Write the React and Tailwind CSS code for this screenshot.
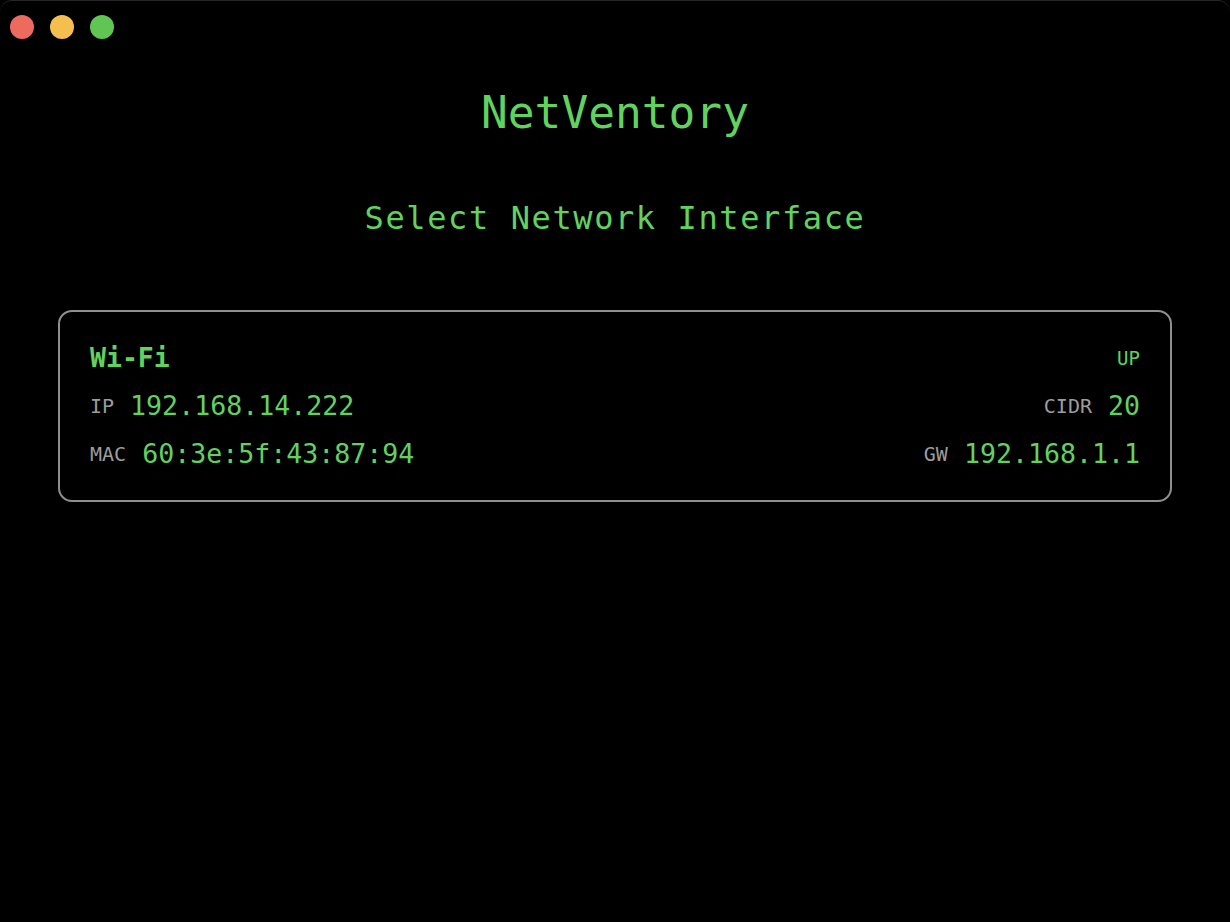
import React from "react";

const iface = {
  name: "Wi-Fi",
  status: "UP",
  ip: "192.168.14.222",
  cidr: "20",
  mac: "60:3e:5f:43:87:94",
  gw: "192.168.1.1",
};

const Field = ({ label, value }) => (
  <div className="flex items-center gap-4">
    <span className="text-[20px] leading-none text-[#9c9c9c]">{label}</span>
    <span className="text-[26.6px] leading-none text-[#62d25f]">{value}</span>
  </div>
);

export default function App() {
  return (
    <div
      className="w-full min-h-screen bg-black"
      style={{ fontFamily: '"DejaVu Sans Mono", "Liberation Mono", monospace' }}
    >
      <div className="min-h-[922px] rounded-t-[12px] border-t border-white/15 bg-black">
        <div className="flex h-[51px] items-center gap-4 pl-[10px]">
          <span className="h-6 w-6 rounded-full bg-[#ed6a5e]" />
          <span className="h-6 w-6 rounded-full bg-[#f5bf4f]" />
          <span className="h-6 w-6 rounded-full bg-[#61c554]" />
        </div>

        <h1 className="mt-[39px] text-center text-[44.5px] leading-[44px] text-[#62d25f]">
          NetVentory
        </h1>

        <h2 className="mt-[67px] text-center text-[32px] leading-[32px] tracking-[0.05em] text-[#62d25f]">
          Select Network Interface
        </h2>

        <div className="mx-[58px] mt-[76px] flex h-[192px] flex-col rounded-[14px] border-2 border-[#8f8f8f] px-[30px] py-[22px]">
          <div className="flex h-12 items-center justify-between">
            <span className="text-[26.5px] font-bold leading-none text-[#62d25f]">
              {iface.name}
            </span>
            <span className="text-[19px] leading-none text-[#62d25f]">
              {iface.status}
            </span>
          </div>
          <div className="flex h-12 items-center justify-between">
            <Field label="IP" value={iface.ip} />
            <Field label="CIDR" value={iface.cidr} />
          </div>
          <div className="flex h-12 items-center justify-between">
            <Field label="MAC" value={iface.mac} />
            <Field label="GW" value={iface.gw} />
          </div>
        </div>
      </div>
    </div>
  );
}
